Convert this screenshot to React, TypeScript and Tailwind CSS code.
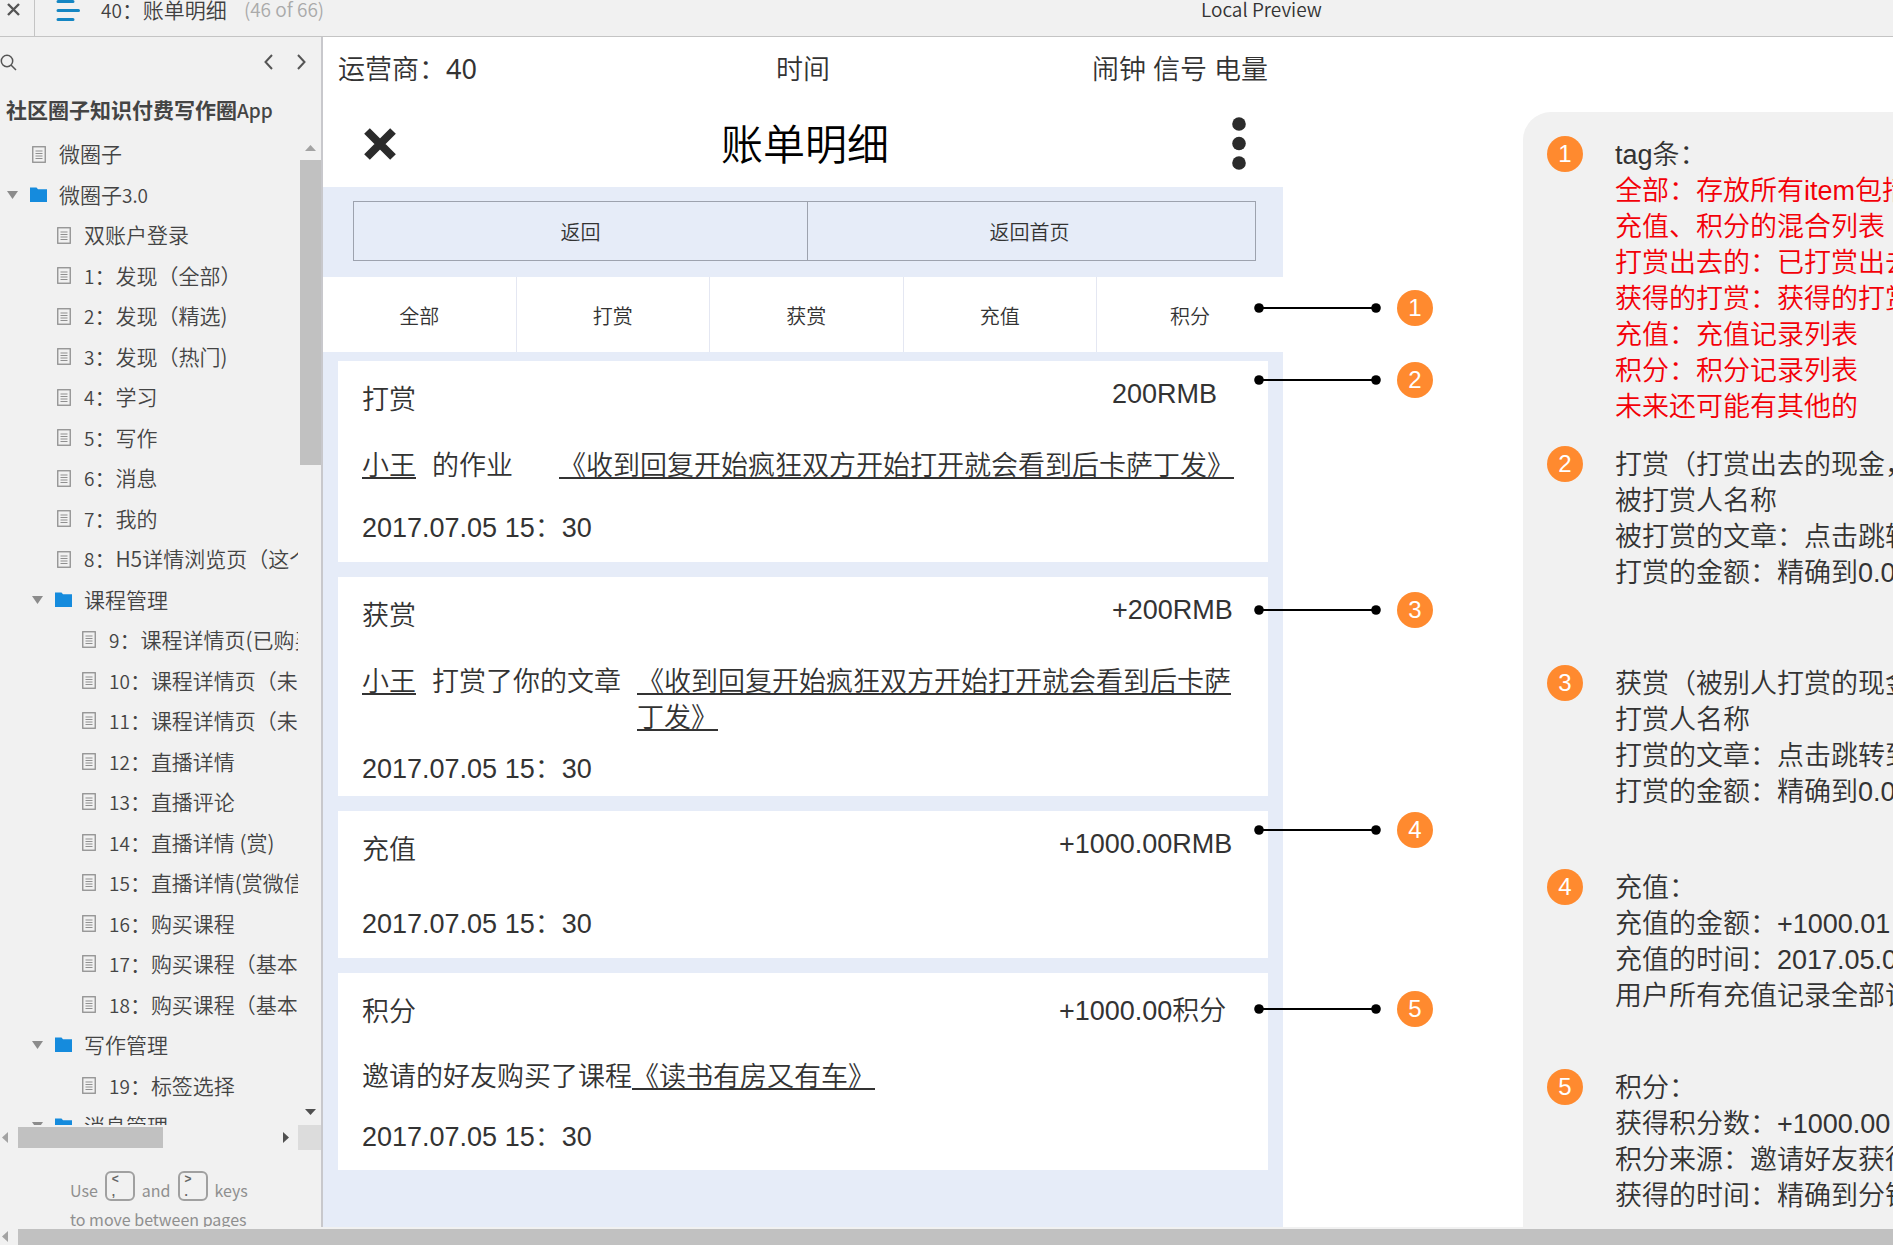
import type { ReactNode } from "react";
import clsx from "clsx";

type TreeItem = {
  level: 0 | 1 | 2;
  no?: string;
  label: string;
  suffix?: string;
  folder?: boolean;
};

const tree: TreeItem[] = [
  { level: 0, label: "微圈子" },
  { level: 0, label: "微圈子", suffix: "3.0", folder: true },
  { level: 1, label: "双账户登录" },
  { level: 1, no: "1", label: "发现（全部）" },
  { level: 1, no: "2", label: "发现（精选)" },
  { level: 1, no: "3", label: "发现（热门)" },
  { level: 1, no: "4", label: "学习" },
  { level: 1, no: "5", label: "写作" },
  { level: 1, no: "6", label: "消息" },
  { level: 1, no: "7", label: "我的" },
  { level: 1, no: "8", label: "H5详情浏览页（这个" },
  { level: 1, label: "课程管理", folder: true },
  { level: 2, no: "9", label: "课程详情页(已购买)" },
  { level: 2, no: "10", label: "课程详情页（未购买）" },
  { level: 2, no: "11", label: "课程详情页（未购买）" },
  { level: 2, no: "12", label: "直播详情" },
  { level: 2, no: "13", label: "直播评论" },
  { level: 2, no: "14", label: "直播详情 (赏)" },
  { level: 2, no: "15", label: "直播详情(赏微信)" },
  { level: 2, no: "16", label: "购买课程" },
  { level: 2, no: "17", label: "购买课程（基本" },
  { level: 2, no: "18", label: "购买课程（基本" },
  { level: 1, label: "写作管理", folder: true },
  { level: 2, no: "19", label: "标签选择" },
  { level: 1, label: "消息管理", folder: true },
];

const indent = ["pl-[7px]", "pl-[32px]", "pl-[57px]"];

const tabs = ["全部", "打赏", "获赏", "充值", "积分"];

const notes = [
  {
    no: 1,
    gap: "mt-0",
    title: "tag条：",
    red: true,
    lines: [
      "全部：存放所有item包括打赏、获赏、",
      "充值、积分的混合列表",
      "打赏出去的：已打赏出去的列表",
      "获得的打赏：获得的打赏列表",
      "充值：充值记录列表",
      "积分：积分记录列表",
      "未来还可能有其他的",
    ],
  },
  {
    no: 2,
    gap: "mt-[21px]",
    title: "打赏（打赏出去的现金，记录）",
    lines: ["被打赏人名称", "被打赏的文章：点击跳转到文章", "打赏的金额：精确到0.01"],
  },
  {
    no: 3,
    gap: "mt-[74px]",
    title: "获赏（被别人打赏的现金）",
    lines: ["打赏人名称", "打赏的文章：点击跳转到文章", "打赏的金额：精确到0.01"],
  },
  {
    no: 4,
    gap: "mt-[59px]",
    title: "充值：",
    lines: ["充值的金额：+1000.01", "充值的时间：2017.05.05", "用户所有充值记录全部记录"],
  },
  {
    no: 5,
    gap: "mt-[55px]",
    title: "积分：",
    lines: ["获得积分数：+1000.00", "积分来源：邀请好友获得", "获得的时间：精确到分钟"],
  },
];

function DocIcon() {
  return (
    <svg width="14" height="17" viewBox="0 0 14 17" fill="none" stroke="#8f8f8f">
      <rect x="0.75" y="0.75" width="12.5" height="15.5" strokeWidth="1.3" />
      <path d="M3.5 5h7M3.5 7.5h7M3.5 10h7M3.5 12.5h7" strokeWidth="1" />
    </svg>
  );
}

function FolderIcon() {
  return (
    <svg width="17" height="15" viewBox="0 0 17 15" fill="#158bdd">
      <path d="M0 0.5h6.5l1.5 1.8h9V15H0z" />
    </svg>
  );
}

function Arrow({ dir, dark }: { dir: "up" | "down" | "left" | "right"; dark?: boolean }) {
  const d = {
    up: "M0 9L5.5 3L11 9z",
    down: "M0 3L5.5 9L11 3z",
    left: "M8 0L2 5.5L8 11z",
    right: "M3 0L9 5.5L3 11z",
  }[dir];
  return (
    <svg width="11" height="11" viewBox="0 0 11 11" fill={dark ? "#505050" : "#a3a3a3"} className="shrink-0">
      <path d={d} />
    </svg>
  );
}

function TreeRow({ item }: { item: TreeItem }) {
  return (
    <li className="flex min-h-0">
      <a href="#" className={clsx("flex items-center whitespace-nowrap", indent[item.level])}>
        <span className="w-[11px] mr-3 shrink-0">
          {item.folder && (
            <svg width="11" height="8" viewBox="0 0 11 8" fill="#8c8c8c">
              <path d="M0 0h11L5.5 8z" />
            </svg>
          )}
        </span>
        <span className="w-[17px] mr-3 shrink-0 flex justify-center">
          {item.folder ? <FolderIcon /> : <DocIcon />}
        </span>
        <span>
          {item.no && <span className="text-[19px]">{item.no}</span>}
          {item.no && "："}
          {item.label}
          {item.suffix && <span className="text-[19px]">{item.suffix}</span>}
        </span>
      </a>
    </li>
  );
}

function KeyCap({ top, bottom }: { top: string; bottom: string }) {
  return (
    <kbd className="w-[30px] h-[30px] border-2 border-[#a0a0a0] rounded-md flex flex-col pl-[5px] font-['Liberation_Sans',sans-serif] text-[12px] leading-[13px] font-bold text-[#666]">
      <span>{top}</span>
      <span>{bottom}</span>
    </kbd>
  );
}

function Sidebar() {
  return (
    <aside className="w-[323px] shrink-0 border-r-2 border-[#c8c8cc] bg-[#f1f1f1] flex flex-col text-[#444] font-['Noto_Sans_CJK_SC',sans-serif] font-[350] text-[21px]">
      <div className="flex items-center h-[50px] shrink-0 pr-[15px]">
        <button aria-label="Search">
          <svg width="17" height="17" viewBox="0 0 17 17" fill="none" stroke="#555" strokeWidth="1.5">
            <circle cx="7" cy="7" r="5.7" />
            <path d="M11 11l5 5" />
          </svg>
        </button>
        <div className="ml-auto flex gap-6">
          <button aria-label="Previous page">
            <svg width="9" height="16" viewBox="0 0 9 16" fill="none" stroke="#555" strokeWidth="2">
              <path d="M8 1L1.5 8L8 15" />
            </svg>
          </button>
          <button aria-label="Next page">
            <svg width="9" height="16" viewBox="0 0 9 16" fill="none" stroke="#555" strokeWidth="2">
              <path d="M1 1l6.5 7L1 15" />
            </svg>
          </button>
        </div>
      </div>
      <h2 className="h-[47px] shrink-0 pl-[6px] leading-[44px] font-bold">
        社区圈子知识付费写作圈<span className="text-[19px] font-medium">App</span>
      </h2>

      <div className="flex-1 min-h-0 flex">
        <div className="flex-1 min-w-0 overflow-hidden">
          <ul className="grid auto-rows-fr h-[1012px]">
            {tree.map((item, i) => (
              <TreeRow key={i} item={item} />
            ))}
          </ul>
        </div>
        {/* vertical scroll bar */}
        <div className="w-[21px] ml-[2px] flex flex-col items-center pt-2 pb-2">
          <Arrow dir="up" />
          <div className="w-full h-[305px] mt-[7px] bg-[#c1c1c1]" />
          <div className="mt-auto">
            <Arrow dir="down" dark />
          </div>
        </div>
      </div>

      {/* horizontal scroll bar */}
      <div className="h-[25px] shrink-0 flex items-center">
        <Arrow dir="left" />
        <div className="w-[145px] h-[21px] ml-[7px] bg-[#c1c1c1]" />
        <div className="ml-auto mr-[7px]">
          <Arrow dir="right" dark />
        </div>
        <div className="w-[23px] h-full bg-[#dcdcdc]" />
      </div>

      <div className="h-[77px] shrink-0 overflow-hidden pt-[21px] pl-[70px] text-[16px] text-[#8f8f8f] font-normal">
        <div className="flex gap-[7px] h-[30px]">
          <span className="leading-[38px]">Use</span>
          <KeyCap top="<" bottom="," />
          <span className="leading-[38px]">and</span>
          <KeyCap top=">" bottom="." />
          <span className="leading-[38px]">keys</span>
        </div>
        <p className="whitespace-nowrap leading-[36px]">to move between pages</p>
      </div>
    </aside>
  );
}

function Badge({ no }: { no: number }) {
  return (
    <span className="w-9 h-9 shrink-0 rounded-full bg-[#ff8a2f] text-white text-[24px] leading-9 text-center">
      {no}
    </span>
  );
}

// pin that hangs over the right edge of the block it explains
function Callout({ no, className }: { no: number; className: string }) {
  return (
    <div className={clsx("absolute flex items-center gap-[14px]", className)}>
      <svg width="130" height="10" viewBox="0 0 130 10">
        <path d="M6 5h117" stroke="#000" strokeWidth="2" />
        <circle cx="6" cy="5" r="4.8" />
        <circle cx="123" cy="5" r="4.8" />
      </svg>
      <Badge no={no} />
    </div>
  );
}

function Card({
  title,
  amount,
  amountClass,
  className,
  callout,
  children,
}: {
  title: string;
  amount: string;
  amountClass: string;
  className: string;
  callout: ReactNode;
  children: ReactNode;
}) {
  return (
    <section className={clsx("relative bg-white pl-6 pr-[34px]", className)}>
      <div className="flex justify-between items-start">
        <h3 className="mt-[6px]">{title}</h3>
        <span className={amountClass}>{amount}</span>
      </div>
      {children}
      {callout}
    </section>
  );
}

function Phone() {
  return (
    <section className="w-[960px] shrink-0 flex flex-col">
      <div className="h-[63px] shrink-0 px-[15px] grid grid-cols-3 items-center font-['Noto_Sans','Noto_Sans_CJK_SC',sans-serif]">
        <span>运营商：<span className="font-normal">40</span></span>
        <span className="text-center">时间</span>
        <span className="text-right">闹钟 信号 电量</span>
      </div>
      <div className="h-[87px] shrink-0 pl-[41px] pr-[37px] grid grid-cols-[1fr_auto_1fr] items-center">
        <button aria-label="关闭" className="justify-self-start">
          <svg width="32" height="32" viewBox="0 0 32 32" stroke="#2b2b2b" strokeWidth="8">
            <path d="M3 3l26 26M29 3L3 29" />
          </svg>
        </button>
        <h1 className="text-[42px] leading-[50px] pt-1 text-black">账单明细</h1>
        <button aria-label="更多" className="justify-self-end">
          <svg width="14" height="53" viewBox="0 0 14 53" fill="#2b2b2b">
            <circle cx="7" cy="7" r="6.8" />
            <circle cx="7" cy="26.5" r="6.8" />
            <circle cx="7" cy="46" r="6.8" />
          </svg>
        </button>
      </div>

      <div className="bg-[#e6ecf8] h-[90px] shrink-0 pt-[14px] pl-[30px] pr-[27px] text-[20px]">
        <div className="flex h-[60px] border border-[#9da2ae]">
          <button className="w-[454px] border-r border-[#9da2ae] pt-[3px]">返回</button>
          <button className="flex-1 pt-[3px] pr-1">返回首页</button>
        </div>
      </div>

      <nav className="relative h-[75px] shrink-0 bg-white">
        <div className="h-full grid grid-cols-[129fr_129fr_129fr_129fr_124fr] text-[20px]">
          {tabs.map((t) => (
            <button key={t} className="border-r border-[#e4e7f2] last:border-0 pt-1">
              {t}
            </button>
          ))}
        </div>
        <Callout no={1} className="top-[13px] -right-[150px]" />
      </nav>

      <div className="flex-1 bg-[#e6ecf8] pt-[9px] pl-[15px] pr-[15px] flex flex-col gap-[15px]">
        <Card
          title="打赏"
          amount="200RMB"
          amountClass="w-[122px]"
          className="pt-[15px] pb-4"
          callout={<Callout no={2} className="top-[1px] -right-[165px]" />}
        >
          <p className="mt-[30px] flex whitespace-nowrap">
            <a href="#" className="underline">小王</a>
            <span className="ml-4">的作业</span>
            <a href="#" className="ml-auto underline">《收到回复开始疯狂双方开始打开就会看到后卡萨丁发》</a>
          </p>
          <time className="block mt-[26px]">2017.07.05 15：30</time>
        </Card>

        <Card
          title="获赏"
          amount="+200RMB"
          amountClass="w-[122px]"
          className="pt-[15px] pb-[9px]"
          callout={<Callout no={3} className="top-[15px] -right-[165px]" />}
        >
          <div className="mt-[30px] flex">
            <a href="#" className="underline shrink-0">小王</a>
            <span className="ml-4 shrink-0">打赏了你的文章</span>
            <a href="#" className="ml-4 underline">《收到回复开始疯狂双方开始打开就会看到后卡萨丁发》</a>
          </div>
          <time className="block mt-[15px]">2017.07.05 15：30</time>
        </Card>

        <Card
          title="充值"
          amount="+1000.00RMB"
          amountClass="w-[175px]"
          className="pt-[15px] pb-4"
          callout={<Callout no={4} className="top-[1px] -right-[165px]" />}
        >
          <time className="block mt-[38px]">2017.07.05 15：30</time>
        </Card>

        <Card
          title="积分"
          amount="+1000.00积分"
          amountClass="w-[175px] mt-[5px]"
          className="pt-[15px] pb-[15px]"
          callout={<Callout no={5} className="top-[18px] -right-[165px]" />}
        >
          <p className="mt-[29px]">
            邀请的好友购买了课程<a href="#" className="underline">《读书有房又有车》</a>
          </p>
          <time className="block mt-[24px]">2017.07.05 15：30</time>
        </Card>
      </div>
    </section>
  );
}

function Notes() {
  return (
    <section className="flex-1 min-w-0 overflow-hidden ml-[240px] mt-[75px] bg-[#f1f1f1] rounded-tl-[28px] pt-6 pl-[24px]">
      {notes.map((n) => (
        <div key={n.no} className={clsx("flex whitespace-nowrap", n.gap)}>
          <Badge no={n.no} />
          <div className="ml-8 pt-px">
            <p>{n.title}</p>
            {n.lines.map((line) => (
              <p key={line} className={n.red ? "text-[#f30008]" : undefined}>
                {line}
              </p>
            ))}
          </div>
        </div>
      ))}
    </section>
  );
}

export default function App() {
  return (
    <div lang="zh-CN" className="h-screen flex flex-col overflow-hidden bg-white text-[#333]">
      <header className="h-[37px] shrink-0 border-b border-[#c4c4c4] bg-[#f1f1f1] flex font-['Noto_Sans_CJK_SC',sans-serif] font-[350] text-[21px] leading-[18px] text-[#404040]">
        <button aria-label="Close" className="w-[35px] h-full shrink-0 border-r border-[#c4c4c4] pl-[7px] pb-[18px]">
          <svg width="13" height="13" viewBox="0 0 13 13" stroke="#555" strokeWidth="2.4">
            <path d="M1 1l11 11M12 1L1 12" />
          </svg>
        </button>
        <button aria-label="Sitemap" className="ml-[21px] h-[22px] shrink-0">
          <svg width="24" height="22" viewBox="0 0 24 22" stroke="#1486c3" strokeWidth="3" strokeLinecap="round">
            <path d="M2 1.5h15M2 10.5h20.5M2 19.5h15" />
          </svg>
        </button>
        <div className="flex-1 flex">
          <span className="ml-[21px]">
            <span className="text-[19px]">40</span>：账单明细
          </span>
          <span className="ml-[17px] text-[19px] text-[#aaa]">(46 of 66)</span>
        </div>
        <span className="text-[19px] text-[#333] w-[692px] shrink-0">Local Preview</span>
      </header>

      <div className="flex-1 min-h-0 flex overflow-hidden">
        <Sidebar />
        <main className="flex-1 min-w-0 flex overflow-hidden font-['Liberation_Sans','Noto_Sans_CJK_SC',sans-serif] font-[350] text-[27px] leading-9">
          <Phone />
          <Notes />
        </main>
      </div>

      <div className="h-[18px] shrink-0 bg-[#f1f1f1] flex items-center">
        <Arrow dir="left" />
        <div className="flex-1 h-4 ml-[7px] mt-[2px] bg-[#c1c1c1]" />
      </div>
    </div>
  );
}
